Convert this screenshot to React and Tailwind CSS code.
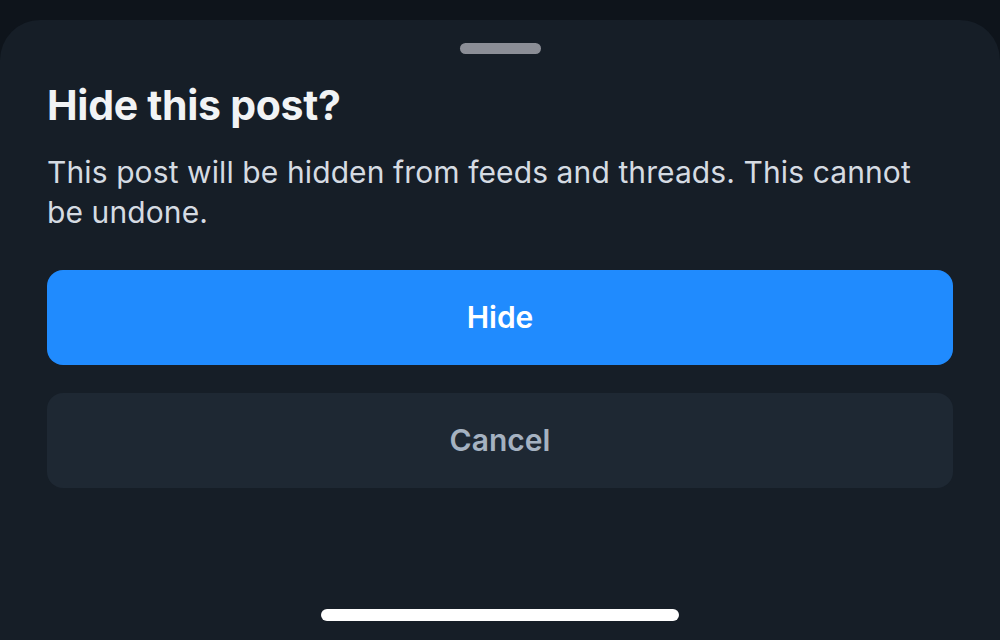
export default function App() {
  return (
    <div className="w-[1000px] h-[640px] bg-[#0e141b] flex flex-col overflow-hidden" style={{ fontFamily: 'Inter, "Noto Sans", sans-serif' }}>
      <div className="mt-[20px] flex-1 bg-[#161e27] rounded-t-[40px] flex flex-col px-[47px]">
        <div className="flex justify-center pt-[23px]">
          <div className="w-[81px] h-[11px] rounded-full bg-[#8b8e96]" />
        </div>
        <h1 className="mt-[27px] text-[41px] leading-[48px] font-bold text-[#f1f3f5] tracking-[-0.3px]">Hide this post?</h1>
        <p className="mt-[23px] text-[30px] leading-[40px] text-[#d5dbe2] tracking-[0.1px]">
          This post will be hidden from feeds and threads. This cannot be undone.
        </p>
        <button className="mt-[38px] h-[95px] w-full rounded-[16px] bg-[#208bfe] text-white text-[30px] font-semibold">Hide</button>
        <button className="mt-[28px] h-[95px] w-full rounded-[16px] bg-[#1e2833] text-[#a5b2c1] text-[30px] font-semibold">Cancel</button>
        <div className="flex-1" />
        <div className="flex justify-center pb-[19px]">
          <div className="w-[358px] h-[12px] rounded-full bg-white" />
        </div>
      </div>
    </div>
  );
}
